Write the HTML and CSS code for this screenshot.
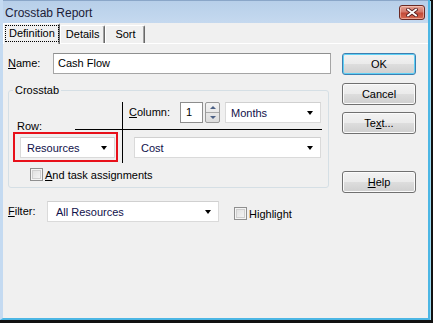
FILE: index.html
```html
<!DOCTYPE html>
<html lang="en">
<head>
    <meta charset="UTF-8">
    <title>Crosstab Report</title>
    <link rel="stylesheet" href="styles.css">
</head>
<body>

    <div class="window">
        <div class="titlebar">
            <span class="title">Crosstab Report</span>
            <span class="close">
                <svg width="12" height="9" viewBox="0 0 12 9">
                    <path d="M2 1.5 L10 7.5 M10 1.5 L2 7.5" stroke="#5a2020" stroke-width="3.6" stroke-linecap="square"/>
                    <path d="M2 1.5 L10 7.5 M10 1.5 L2 7.5" stroke="#fff" stroke-width="1.8" stroke-linecap="square"/>
                </svg>
            </span>
        </div>

        <div class="tabs">
            <div class="tab active"><span class="focus">Definition</span></div>
            <div class="tab">Details</div>
            <div class="tab">Sort</div>
        </div>

        <div class="page">
            <div class="left">
                <div class="name-row">
                    <span class="lbl name-lbl"><u>N</u>ame:</span>
                    <div class="textbox">Cash Flow</div>
                </div>

                <fieldset class="group">
                    <legend>Crosstab</legend>
                    <div class="xt">
                        <div class="xt-row">
                            <div class="row-lbl">Row:</div>
                            <div class="marker">
                                <div class="combo resources"><span>Resources</span><i class="arrow"></i></div>
                            </div>
                        </div>
                        <div class="xt-col">
                            <div class="xt-top">
                                <span class="lbl col-lbl"><u>C</u>olumn:</span>
                                <div class="spin-box">1</div>
                                <div class="spin">
                                    <span class="spin-up"></span>
                                    <span class="spin-down"></span>
                                </div>
                                <div class="combo months"><span>Months</span><i class="arrow"></i></div>
                            </div>
                            <div class="xt-line"></div>
                            <div class="xt-bottom">
                                <div class="combo cost"><span>Cost</span><i class="arrow"></i></div>
                            </div>
                        </div>
                    </div>
                    <div class="check-row">
                        <span class="check"></span>
                        <span><u>A</u>nd task assignments</span>
                    </div>
                </fieldset>

                <div class="filter-row">
                    <span class="lbl filter-lbl"><u>F</u>ilter:</span>
                    <div class="combo filter"><span>All Resources</span><i class="arrow"></i></div>
                    <span class="check hl-check"></span>
                    <span class="hl-lbl">Hi<u>g</u>hlight</span>
                </div>
            </div>

            <div class="buttons">
                <div class="btn default">OK</div>
                <div class="btn">Cancel</div>
                <div class="btn">Te<u>x</u>t...</div>
                <div class="btn help"><u>H</u>elp</div>
            </div>
        </div>
    </div>

</body>
</html>
```

FILE: styles.css
```css
body {
    margin: 0;
    background: #111;
    font-family: "Liberation Sans", Arial, sans-serif;
    font-size: 11px;
    color: #000;
}
u {
    text-decoration: underline;
    text-underline-offset: 1px;
}
.window {
    width: 425px;
    height: 318px;
    border-left: 3px solid #c4daf1;
    border-right: 2px solid #4cb6e4;
    border-bottom: 2px solid #4cb6e4;
    box-shadow: 1px 1px 0 #9fdcf3;
    background: #f0f0f0;
    display: flex;
    flex-direction: column;
    overflow: hidden;
}
.titlebar {
    height: 23px;
    flex: none;
    display: flex;
    align-items: center;
    justify-content: space-between;
    padding: 0 3px 0 2px;
    background: linear-gradient(#b7cfe9, #c5d9ef);
    border-top: 1px solid #8aa6c8;
    box-sizing: border-box;
}
.title {
    font-size: 12px;
    color: #1c1c38;
    padding-top: 1px;
}
.close {
    width: 26px;
    height: 15px;
    box-sizing: border-box;
    border: 1px solid #6b2a24;
    border-radius: 3px;
    background: linear-gradient(#e5a394 0%, #d4786a 45%, #c24a38 55%, #d86a52 100%);
    box-shadow: inset 0 0 0 1px rgba(255, 220, 210, 0.5);
    display: flex;
    align-items: center;
    justify-content: center;
    margin-top: 1px;
}
.tabs {
    height: 20px;
    flex: none;
    display: flex;
    align-items: flex-end;
    position: relative;
    z-index: 1;
}
.tab {
    height: 18px;
    box-sizing: border-box;
    min-width: 40px;
    padding: 0 5px;
    text-align: center;
    line-height: 17px;
    border: 1px solid #fff;
    border-right-color: #696969;
    border-bottom: none;
    box-shadow: inset -1px 0 #a0a0a0;
    border-radius: 2px 2px 0 0;
}
.tab.active {
    height: 21px;
    margin-bottom: -1px;
    padding: 2px 1px 0 2px;
    line-height: 14px;
    background: #f0f0f0;
}
.focus {
    display: inline-block;
    outline: 1px dotted #000;
    outline-offset: 0;
    padding: 0 3px 1px 3px;
}
.page {
    flex: 1;
    display: flex;
    border-top: 1px solid #fff;
    padding: 9px 0 0 5px;
}
.left {
    width: 323px;
}
.lbl {
    line-height: 21px;
}
.name-row {
    display: flex;
    height: 21px;
}
.name-lbl {
    width: 45px;
}
.textbox {
    flex: 1;
    height: 21px;
    box-sizing: border-box;
    border: 1px solid #a5a5a5;
    border-top-color: #8e8f8f;
    background: #fff;
    padding-left: 4px;
    line-height: 19px;
}
.group {
    margin: 10px 2px 0 0;
    padding: 5px 0 6px 0;
    border: 1px solid #d5dfe5;
    border-radius: 3px;
    min-width: 0;
}
.group legend {
    padding: 0 2px;
    margin-left: 4px;
    line-height: 13px;
}
.xt {
    display: flex;
}
.xt-row {
    width: 113px;
}
.row-lbl {
    padding: 18px 0 0 8px;
    line-height: 13px;
}
.marker {
    margin: -1px 0 0 4px;
    width: 105px;
    height: 30px;
    box-sizing: border-box;
    border: 2px solid #e8101a;
    padding: 3px 1px 0 5px;
}
.xt-col {
    flex: 1;
    height: 61px;
    border-left: 1px solid #000;
}
.xt-top {
    height: 27px;
    display: flex;
    align-items: flex-start;
    padding-left: 6px;
}
.col-lbl {
    width: 51px;
}
.spin-box {
    width: 23px;
    height: 21px;
    box-sizing: border-box;
    border: 1px solid #8d8d8d;
    background: #fff;
    padding-left: 5px;
    line-height: 19px;
}
.spin {
    width: 15px;
    height: 21px;
    box-sizing: border-box;
    margin-left: 2px;
    border: 1px solid #9a9a9a;
    border-radius: 2px;
    display: flex;
    flex-direction: column;
    background: linear-gradient(#f4f4f4, #dcdcdc);
}
.spin-up,
.spin-down {
    flex: 1;
    display: flex;
    align-items: center;
    justify-content: center;
}
.spin-up {
    border-bottom: 1px solid #a8a8a8;
}
.spin-up::after {
    content: "";
    border-left: 3px solid transparent;
    border-right: 3px solid transparent;
    border-bottom: 3px solid #4d6185;
}
.spin-down::after {
    content: "";
    border-left: 3px solid transparent;
    border-right: 3px solid transparent;
    border-top: 3px solid #4d6185;
}
.combo {
    height: 21px;
    box-sizing: border-box;
    border: 1px solid #dadada;
    border-top-color: #d0d0d0;
    background: #fff;
    display: flex;
    align-items: center;
    justify-content: space-between;
    padding: 0 7px 0 5px;
    color: #10104a;
}
.arrow {
    border-left: 3.5px solid transparent;
    border-right: 3.5px solid transparent;
    border-top: 4px solid #000;
    margin-top: 1px;
}
.resources {
    width: 95px;
    padding-left: 6px;
}
.months {
    width: 96px;
    margin-left: 5px;
}
.xt-line {
    height: 1px;
    background: #000;
    margin: 0 6px 0 -48px;
}
.xt-bottom {
    padding: 7px 7px 0 11px;
}
.cost {
    padding-left: 6px;
}
.check-row {
    display: flex;
    align-items: center;
    padding: 5px 0 0 21px;
    height: 13px;
}
.check {
    width: 13px;
    height: 13px;
    box-sizing: border-box;
    border: 1px solid #8f8f8f;
    background: linear-gradient(135deg, #dcdcdc, #f8f8f8);
    box-shadow: inset 0 0 0 1px #f4f4f4, inset 0 0 0 2px #cfcfcf;
    margin-right: 2px;
    flex: none;
}
.filter-row {
    display: flex;
    align-items: center;
    margin-top: 13px;
    height: 21px;
}
.filter-lbl {
    width: 39px;
}
.filter {
    width: 172px;
    padding-left: 8px;
}
.hl-check {
    margin: 4px 2px 0 15px;
}
.hl-lbl {
    padding-top: 4px;
}
.buttons {
    margin-left: 11px;
    width: 74px;
    display: flex;
    flex-direction: column;
}
.btn {
    height: 22px;
    box-sizing: border-box;
    border: 1px solid #707070;
    border-radius: 3px;
    background: linear-gradient(#f2f2f2 0%, #ebebeb 48%, #dddddd 52%, #cfcfcf 100%);
    box-shadow: inset 0 0 0 1px #fbfbfb;
    text-align: center;
    line-height: 20px;
    margin-bottom: 8px;
}
.btn.default {
    border-color: #3c7fb1;
    box-shadow: inset 0 0 0 1px #5fd0f5;
}
.btn:nth-child(3) {
    margin-top: -1px;
}
.help {
    margin-top: 29px;
}
```
